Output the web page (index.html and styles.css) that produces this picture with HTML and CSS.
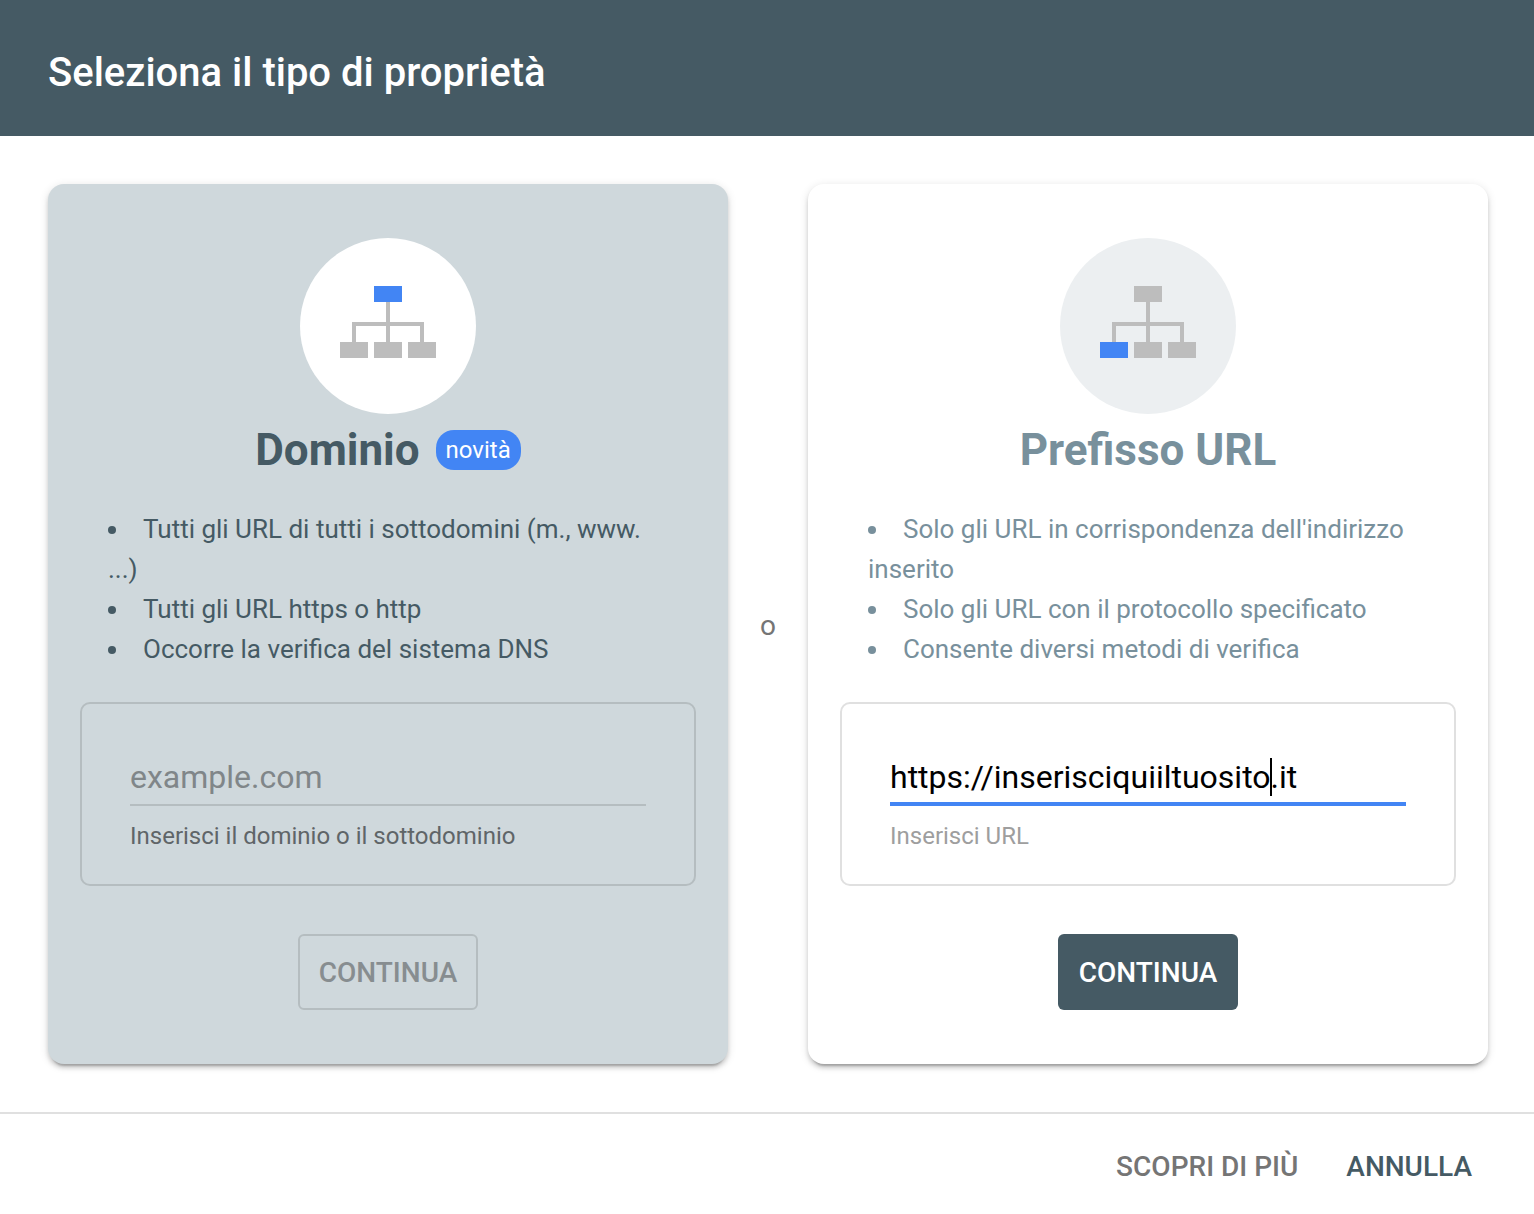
FILE: index.html
```html
<!DOCTYPE html>
<html lang="it">
<head>
    <meta charset="UTF-8">
    <meta name="viewport" content="width=device-width, initial-scale=1.0">
    <title>Seleziona il tipo di proprietà</title>
    <link rel="stylesheet" href="styles.css">
</head>
<body>
    <header class="dialog-header">
        <h1>Seleziona il tipo di proprietà</h1>
    </header>

    <main class="options">
        <form class="card card-domain">
            <div class="icon">
                <svg width="96" height="72" viewBox="0 0 96 72" shape-rendering="crispEdges" aria-hidden="true">
                    <path class="node" d="M46 16h4v20h34v20h-4V40H50v16h-4V40H16v16h-4V36h34z"/>
                    <path class="node" d="M0 56h28v16H0zM34 56h28v16H34zM68 56h28v16H68z"/>
                    <path class="node-active" d="M34 0h28v16H34z"/>
                </svg>
            </div>
            <h2>Dominio <span class="badge">novità</span></h2>
            <ul>
                <li>Tutti gli URL di tutti i sottodomini (m., www. ...)</li>
                <li>Tutti gli URL https o http</li>
                <li>Occorre la verifica del sistema DNS</li>
            </ul>
            <div class="field">
                <div class="input-wrap">
                    <input type="text" id="domain" placeholder="example.com">
                </div>
                <label for="domain">Inserisci il dominio o il sottodominio</label>
            </div>
            <button type="button" class="continue" disabled>CONTINUA</button>
        </form>

        <span class="or">o</span>

        <form class="card card-prefix">
            <div class="icon">
                <svg width="96" height="72" viewBox="0 0 96 72" shape-rendering="crispEdges" aria-hidden="true">
                    <path class="node" d="M46 16h4v20h34v20h-4V40H50v16h-4V40H16v16h-4V36h34z"/>
                    <path class="node" d="M34 0h28v16H34zM34 56h28v16H34zM68 56h28v16H68z"/>
                    <path class="node-active" d="M0 56h28v16H0z"/>
                </svg>
            </div>
            <h2>Prefisso URL</h2>
            <ul>
                <li>Solo gli URL in corrispondenza dell'indirizzo inserito</li>
                <li>Solo gli URL con il protocollo specificato</li>
                <li>Consente diversi metodi di verifica</li>
            </ul>
            <div class="field">
                <div class="input-wrap">
                    <input type="text" id="prefix" value="https://inserisciquiiltuosito.it" spellcheck="false">
                    <span class="caret"></span>
                </div>
                <label for="prefix">Inserisci URL</label>
            </div>
            <button type="button" class="continue">CONTINUA</button>
        </form>
    </main>

    <footer class="dialog-footer">
        <a href="#" class="learn-more">SCOPRI DI PIÙ</a>
        <button type="button" class="cancel">ANNULLA</button>
    </footer>
</body>
</html>
```

FILE: styles.css
```css
* { box-sizing: border-box; }
body {
    margin: 0;
    background-color: #fff;
    font-family: Roboto, "Liberation Sans", sans-serif;
}
h1, h2, ul { margin: 0; padding: 0; }
input, button { font-family: inherit; }

.dialog-header {
    padding: 48px 48px 38px;
    background-color: #455a64;
    color: #fff;
}
.dialog-header h1 {
    font-size: 40px;
    line-height: 50px;
    font-weight: 500;
}

.options {
    display: flex;
    align-items: stretch;
    padding: 48px 46px 48px 48px;
}
.or {
    flex: 0 0 80px;
    align-self: center;
    padding-top: 4px;
    text-align: center;
    font-size: 28px;
    line-height: 32px;
    color: #757575;
}

/* cards */
.card {
    flex: 1;
    min-width: 0;
    display: flex;
    flex-direction: column;
    align-items: center;
    padding: 54px 32px;
    border-radius: 16px;
    background-color: #fff;
    color: #78909c;
    box-shadow: 0 6px 2px -4px rgba(0, 0, 0, 0.2), 0 4px 4px rgba(0, 0, 0, 0.14), 0 2px 10px rgba(0, 0, 0, 0.12);
}
.card-domain {
    background-color: #cfd8dc;
    color: #455a64;
}
.icon {
    display: flex;
    align-items: center;
    justify-content: center;
    width: 176px;
    height: 176px;
    padding-bottom: 8px;
    border-radius: 50%;
    background-color: #eceff1;
}
.card-domain .icon { background-color: #fff; }
.node { fill: #bdbdbd; }
.node-active { fill: #4285f4; }

.card h2 {
    display: flex;
    align-items: center;
    gap: 16px;
    margin: 10px 0 33px;
    font-size: 44px;
    line-height: 52px;
    font-weight: 700;
}
.badge {
    padding: 0 10px;
    border-radius: 18px;
    background-color: #4285f4;
    color: #fff;
    font-size: 24px;
    line-height: 40px;
    font-weight: 400;
}
.card ul {
    align-self: stretch;
    padding: 0 28px;
    list-style: disc inside;
    font-size: 26px;
    line-height: 40px;
}

/* text fields */
.field {
    align-self: stretch;
    margin: 33px 0 48px;
    padding: 54px 48px 34px;
    border: 2px solid #e0e0e0;
    border-radius: 10px;
}
.card-domain .field { border-color: #b5bdc0; }
.input-wrap { position: relative; }
.field input {
    display: block;
    width: 100%;
    height: 48px;
    padding: 0 0 8px;
    border: none;
    border-bottom: 2px solid #b5bdc0;
    outline: none;
    background: transparent;
    color: #000;
    font-size: 32px;
    line-height: 38px;
}
.field input::placeholder { color: #808689; }
.card-prefix .field input {
    padding-bottom: 6px;
    border-bottom: 4px solid #4285f4;
}
.caret {
    position: absolute;
    top: 0;
    left: 380px;
    width: 2px;
    height: 38px;
    background-color: #000;
}
.field label {
    display: block;
    margin-top: 16px;
    font-size: 24px;
    line-height: 28px;
    color: #9e9e9e;
}
.card-domain .field label { color: #5f6568; }

/* buttons */
.continue {
    width: 180px;
    height: 76px;
    padding: 0;
    border: none;
    border-radius: 6px;
    background-color: #455a64;
    color: #fff;
    font-size: 28px;
    font-weight: 500;
    cursor: pointer;
}
.continue:disabled {
    border: 2px solid #b5bdc0;
    background: transparent;
    color: #878d90;
    cursor: default;
}

.dialog-footer {
    display: flex;
    justify-content: flex-end;
    gap: 48px;
    padding: 36px 62px 30px;
    border-top: 2px solid #e0e0e0;
    font-size: 28px;
    line-height: 34px;
    font-weight: 500;
}
.learn-more {
    color: #757575;
    text-decoration: none;
}
.cancel {
    padding: 0;
    border: none;
    background: none;
    color: #455a64;
    font-size: 28px;
    line-height: 34px;
    font-weight: 500;
    cursor: pointer;
}
```
